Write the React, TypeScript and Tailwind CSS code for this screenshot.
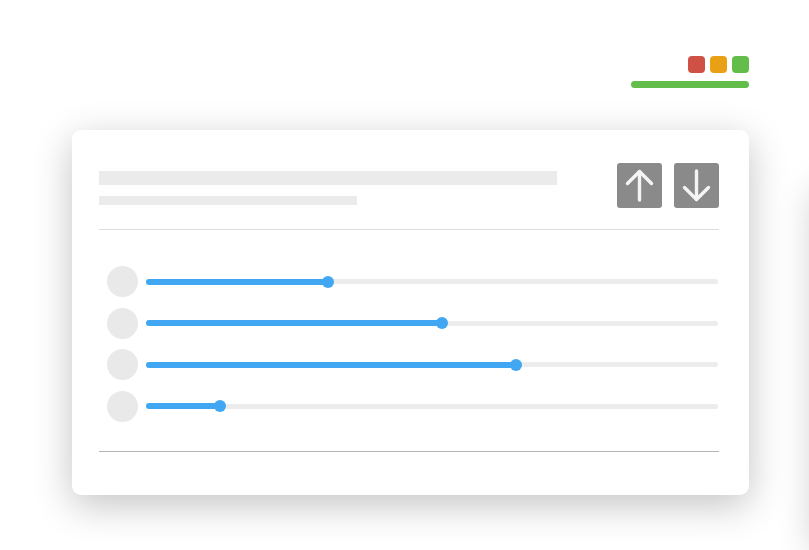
const rows = [31.8, 51.7, 64.7, 12.9];

function Arrow({ down }: { down?: boolean }) {
  return (
    <button className="w-[45px] h-[45px] rounded-[3px] bg-[#8a8a8a] flex items-center justify-center">
      <svg
        width="45"
        height="45"
        viewBox="0 0 45 45"
        fill="none"
        stroke="#f4f4f4"
        strokeWidth="3.4"
        strokeLinecap="round"
        strokeLinejoin="round"
        className={down ? "rotate-180" : ""}
      >
        <path d="M22.5 37V8.5" />
        <path d="M10.5 20.5L22.5 8.5L34.5 20.5" />
      </svg>
    </button>
  );
}

function SliderRow({ value }: { value: number }) {
  return (
    <div className="flex items-center h-[31px] pl-2 gap-2">
      <div className="w-[31px] h-[31px] rounded-full bg-[#e9e9e9] shrink-0" />
      <div className="relative flex-1 h-[5px] rounded-full bg-[#ececec] mr-px">
        <div
          className="absolute left-0 top-1/2 -translate-y-1/2 h-[6px] rounded-full bg-[#42a7f3]"
          style={{ width: `${value}%` }}
        />
        <div
          className="absolute top-1/2 -translate-y-1/2 -translate-x-1/2 w-[12px] h-[12px] rounded-full bg-[#42a7f3]"
          style={{ left: `${value}%` }}
        />
      </div>
    </div>
  );
}

function Card({ empty }: { empty?: boolean }) {
  return (
    <div className="w-[677px] h-[365px] shrink-0 bg-white rounded-[9px] shadow-[0_10px_38px_rgba(0,0,0,0.24)] pl-[27px] pr-[30px] pt-[33px]">
      {!empty && (
        <>
          <div className="flex items-start justify-between h-[45px]">
            <div className="flex flex-col gap-[11px] pt-2">
              <div className="w-[458px] h-[14px] bg-[#ebebeb]" />
              <div className="w-[258px] h-[9px] bg-[#ebebeb]" />
            </div>
            <div className="flex gap-3">
              <Arrow />
              <Arrow down />
            </div>
          </div>
          <div className="mt-[21px] h-px bg-[#dedede]" />
          <div className="flex flex-col gap-[10.5px] pt-[36px] pb-[29px]">
            {rows.map((v, i) => (
              <SliderRow key={i} value={v} />
            ))}
          </div>
          <div className="h-[1.5px] bg-[#b4b4b4]" />
        </>
      )}
    </div>
  );
}

export default function App() {
  return (
    <div className="w-[809px] h-[550px] overflow-hidden bg-white pl-[72px] pt-[56px] font-['Liberation_Sans',sans-serif]">
      <div className="flex gap-[68px]">
        <div className="flex flex-col shrink-0">
          <div className="flex flex-col items-end">
            <div className="flex gap-[5px]">
              <div className="w-[17px] h-[17px] rounded-[4px] bg-[#cf5145]" />
              <div className="w-[17px] h-[17px] rounded-[4px] bg-[#eaa014]" />
              <div className="w-[17px] h-[17px] rounded-[4px] bg-[#63bd4b]" />
            </div>
            <div className="mt-2 w-[118px] h-[7px] rounded-full bg-[#63bd4b]" />
          </div>
          <div className="mt-[42px]">
            <Card />
          </div>
        </div>
        <div className="pt-[123px]">
          <Card empty />
        </div>
      </div>
    </div>
  );
}
